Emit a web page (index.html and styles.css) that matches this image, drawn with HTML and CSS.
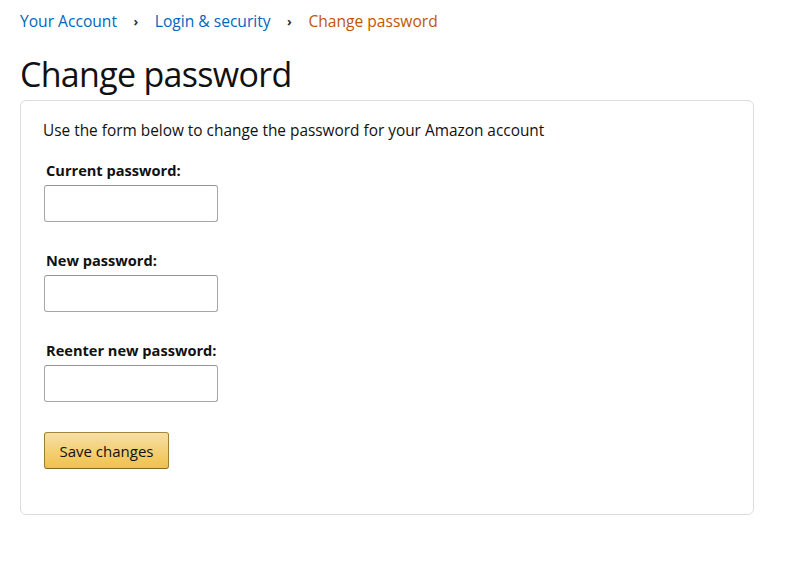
FILE: index.html
```html
<!DOCTYPE html>
<html lang="en">
<head>
  <meta charset="UTF-8" />
  <title>Change password</title>
  <link rel="stylesheet" href="styles.css">
</head>
<body>
  <div class="page">
    <div class="breadcrumb">
      <a href="#">Your Account</a>
      <span class="sep">›</span>
      <a href="#">Login &amp; security</a>
      <span class="sep">›</span>
      <span class="current">Change password</span>
    </div>

    <h1>Change password</h1>

    <div class="box">
      <p class="intro">Use the form below to change the password for your Amazon account</p>

      <label for="cur-pass">Current password:</label>
      <input type="password" id="cur-pass">

      <label for="new-pass">New password:</label>
      <input type="password" id="new-pass">

      <label for="re-pass">Reenter new password:</label>
      <input type="password" id="re-pass">

      <button>Save changes</button>
    </div>
  </div>
</body>
</html>
```

FILE: styles.css
```css
* {
  box-sizing: border-box;
  font-family: "Open Sans", Arial, sans-serif;
}
body {
  margin: 0;
  padding: 0;
  background: white;
  color: #111;
}
.page {
  padding: 10px 34px 0 20px;
}
.breadcrumb {
  font-size: 15.6px;
  line-height: 22px;
  display: flex;
  gap: 16.5px;
}
.breadcrumb a { color: #0066c0; text-decoration: none; }
.breadcrumb .sep { color: #333; font-size: 13px; font-weight: 700; }
.breadcrumb .current { color: #c45500; }
h1 {
  font-size: 34px;
  font-weight: 400;
  letter-spacing: -0.7px;
  line-height: 48px;
  margin: 18px 0 2px 0;
}
.box {
  border: 1px solid #ddd;
  border-radius: 6px;
  padding: 20px 22px 45px 23px;
  display: flex;
  flex-direction: column;
  align-items: flex-start;
}
.intro {
  font-size: 15.4px;
  line-height: 20px;
  margin: 0 0 19px -1px;
}
label {
  font-size: 14.6px;
  font-weight: 700;
  line-height: 20px;
  margin-left: 2px;
  margin-bottom: 5px;
}
input {
  width: 174px;
  height: 37px;
  border: 1px solid #a6a6a6;
  border-top-color: #949494;
  border-radius: 3px;
  margin-bottom: 28px;
}
button {
  margin-top: 2px;
  width: 125px;
  height: 37px;
  font-size: 15px;
  color: #111;
  background: linear-gradient(to bottom, #f7dfa5, #f0c14b);
  border: 1px solid #a88734;
  border-color: #a88734 #9c7e31 #846a29;
  border-radius: 3px;
  cursor: pointer;
}
```
